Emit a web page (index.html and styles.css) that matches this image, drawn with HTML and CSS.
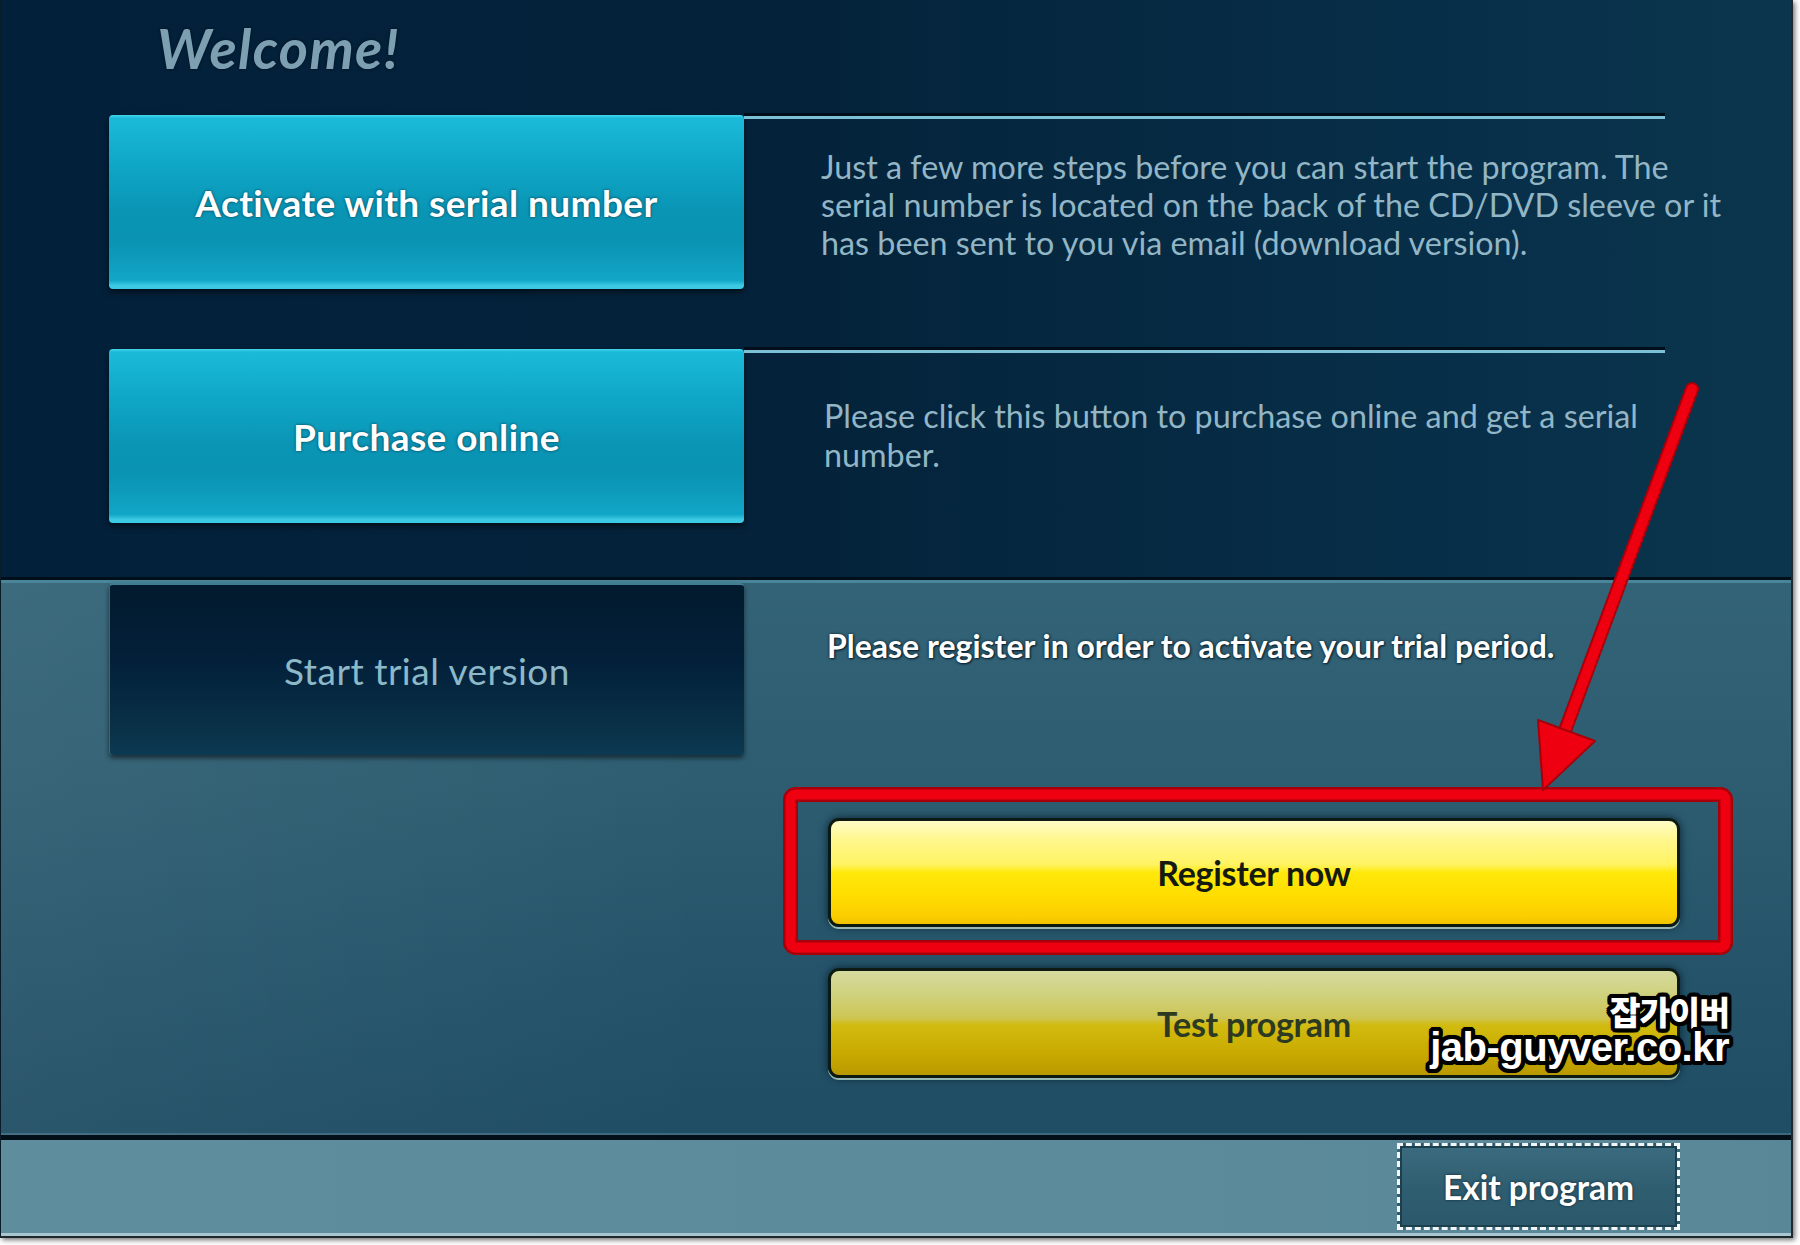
FILE: index.html
```html
<!DOCTYPE html>
<html lang="en">
<head>
<meta charset="utf-8">
<title>Welcome</title>
<link rel="stylesheet" href="styles.css">
</head>
<body>
<div class="app">
  <section class="top">
    <h1 class="welcome">Welcome!</h1>
    <div class="row row-one">
      <div class="tile tile-cyan">Activate with serial number</div>
      <div class="info info-lined">
        <p class="desc">Just a few more steps before you can start the program. The<br>serial number is located on the back of the CD/DVD sleeve or it<br>has been sent to you via email (download version).</p>
      </div>
    </div>
    <div class="row row-two">
      <div class="tile tile-cyan">Purchase online</div>
      <div class="info info-lined">
        <p class="desc desc-low">Please click this button to purchase online and get a serial<br>number.</p>
      </div>
    </div>
  </section>
  <div class="sep"></div>
  <section class="bottom">
    <div class="row row-three">
      <div class="tile tile-dark">Start trial version</div>
      <div class="info">
        <p class="note">Please register in order to activate your trial period.</p>
        <div class="actions">
          <div class="yb yb-register">Register now</div>
          <div class="yb yb-test">Test program</div>
        </div>
      </div>
    </div>
  </section>
  <div class="foot-sep"></div>
  <footer class="footer">
    <div class="exit">Exit program</div>
  </footer>

  <svg class="annot" width="1792" height="1237" viewBox="0 0 1792 1237">
    <rect x="790.5" y="794.5" width="935" height="153" rx="5" fill="none" stroke="#a8000a" stroke-width="15"/>
    <rect x="790.5" y="794.5" width="935" height="153" rx="5" fill="none" stroke="#ee0010" stroke-width="10"/>
    <line x1="1692" y1="389" x2="1566" y2="728" stroke="#a8000a" stroke-width="14" stroke-linecap="round"/>
    <line x1="1692" y1="389" x2="1566" y2="728" stroke="#ee0010" stroke-width="10" stroke-linecap="round"/>
    <polygon points="1538,720 1595,741 1543,790" fill="#ee0010" stroke="#a8000a" stroke-width="2" stroke-linejoin="round"/>
  </svg>

  <div class="watermark">
    <span class="wm-ko">잡가이버</span>
    <span class="wm-en">jab-guyver.co.kr</span>
  </div>
</div>
</body>
</html>
```

FILE: styles.css
```css
html, body {
  margin: 0;
  padding: 0;
}
body {
  background: #ffffff;
  width: 1800px;
  height: 1245px;
  overflow: hidden;
  font-family: "Lato", "Open Sans", sans-serif;
}
.app {
  position: relative;
  box-sizing: border-box;
  width: 1793px;
  height: 1238px;
  border-left: 1px solid #0a1c28;
  border-right: 2px solid #1c2a30;
  border-bottom: 2px solid #1c2a30;
  box-shadow: 2px 2px 5px rgba(0, 0, 0, 0.55);
  display: flex;
  flex-direction: column;
  overflow: hidden;
}

/* ---------- top (dark) ---------- */
.top {
  height: 577px;
  box-sizing: border-box;
  background: linear-gradient(90deg, #03203a 0%, #04233b 45%, #08304a 85%, #0b354d 100%);
}
.welcome {
  margin: 0;
  box-sizing: border-box;
  height: 113px;
  padding: 20px 0 0 156px;
  font-size: 56px;
  line-height: 56px;
  font-style: italic;
  font-weight: 700;
  color: #7c9fb1;
  letter-spacing: 1.3px;
  text-shadow: 0 0 3px rgba(0, 0, 0, 0.6);
}
.row {
  display: flex;
  padding-left: 108px;
}
.row-one {
  height: 176px;
}
.row-two {
  margin-top: 58px;
  height: 176px;
}
.tile {
  flex: 0 0 auto;
  width: 635px;
  height: 174px;
  margin-top: 2px;
  box-sizing: border-box;
  display: flex;
  align-items: center;
  justify-content: center;
  border-radius: 4px;
  font-size: 37px;
  letter-spacing: 0.4px;
}
.tile-cyan {
  background: linear-gradient(180deg, #46d6ee 0, #1bbad8 3px, #10a9c9 25%, #0a95b5 55%, #0a93b3 72%, #12a6c6 95%, #3cc9e3 98%, #3cc9e3 100%);
  box-shadow: 0 3px 6px rgba(0, 0, 0, 0.6);
  color: #ffffff;
  font-weight: 700;
  text-shadow: 0 0 3px rgba(0, 50, 70, 0.9);
}
.info {
  width: 921px;
  box-sizing: border-box;
}
.info-lined {
  border-top: 3px solid #010d18;
  background: linear-gradient(#7cc0d5, #7cc0d5) top left / 100% 3px no-repeat;
}
.desc {
  margin: 0;
  padding: 32px 0 0 77px;
  white-space: nowrap;
  font-size: 32.3px;
  line-height: 38px;
  color: #92b6c5;
}
.desc-low {
  padding-top: 46px;
  padding-left: 80px;
  line-height: 39px;
}

/* ---------- separator ---------- */
.sep {
  height: 6px;
  background: linear-gradient(180deg, #010f1b 0, #010f1b 3px, #4a8599 3px, #4a8599 6px);
}

/* ---------- bottom (teal) ---------- */
.bottom {
  height: 552px;
  background:
    linear-gradient(90deg, rgba(255, 255, 255, 0.05) 0%, rgba(255, 255, 255, 0) 40%),
    linear-gradient(180deg, #336377 0%, #2e5d71 35%, #25546a 70%, #1f4d64 100%);
  box-shadow: inset 0 -2px 0 rgba(150, 190, 200, 0.25);
}
.row-three .tile {
  margin-top: 0;
  height: 172px;
}
.tile-dark {
  background: linear-gradient(180deg, #021a2d 0%, #03203a 45%, #093148 85%, #0c3a52 100%);
  border-top: 2px solid #3f7d92;
  border-left: 1px solid #2e6a7f;
  box-shadow: 0 3px 5px rgba(0, 0, 0, 0.55);
  color: #8cb8c8;
  font-weight: 400;
  letter-spacing: 0.5px;
}
.note {
  margin: 0;
  padding: 43px 0 0 83px;
  white-space: nowrap;
  font-size: 32px;
  line-height: 40px;
  font-weight: 700;
  color: #ffffff;
  text-shadow: 0 0 3px #0a2230, 1px 1px 2px #0a2230;
}
.actions {
  margin: 152px 0 0 84px;
  display: flex;
  flex-direction: column;
  gap: 41px;
  width: 852px;
}
.yb {
  box-sizing: border-box;
  height: 109px;
  border: 3px solid #0c1a12;
  border-radius: 11px;
  display: flex;
  align-items: center;
  justify-content: center;
  font-size: 34px;
  font-weight: 700;
  letter-spacing: -0.3px;
  box-shadow: 0 2px 0 rgba(175, 205, 195, 0.85), 0 0 8px rgba(0, 20, 35, 0.8);
}
.yb-register {
  background: linear-gradient(180deg, #fffcc8 0%, #fff78e 18%, #fff363 42%, #ffe90c 50%, #ffdd00 72%, #fbce00 92%, #efc400 100%);
  color: #141a10;
}
.yb-test {
  height: 110px;
  background: linear-gradient(180deg, #d6da9e 0%, #cfd27e 22%, #cec555 45%, #d2bb10 52%, #c9ab00 78%, #b99900 100%);
  color: #2c3a22;
}

/* ---------- footer ---------- */
.foot-sep {
  height: 5px;
  background: #020f18;
}
.footer {
  flex: 1 1 auto;
  display: flex;
  justify-content: flex-end;
  padding: 3px 111px 0 0;
  background: linear-gradient(90deg, #5e8e9e 0%, #5c8b9b 60%, #5a8797 100%);
  box-shadow: inset 0 -3px 0 #a9c6d0;
}
.exit {
  box-sizing: border-box;
  width: 283px;
  height: 87px;
  border: 3px dashed #f2f6f6;
  background: linear-gradient(180deg, #3b6b7f 0%, #2f5d70 55%, #2c586b 100%);
  box-shadow: inset 0 0 0 2px #1c3f4e;
  display: flex;
  align-items: center;
  justify-content: center;
  color: #ffffff;
  font-size: 33.5px;
  font-weight: 700;
  text-shadow: 0 0 3px #0c2430;
}

/* ---------- overlays ---------- */
.annot {
  position: absolute;
  left: -1px;
  top: 0;
  pointer-events: none;
}
.watermark {
  position: absolute;
  right: 62px;
  top: 993px;
  display: flex;
  flex-direction: column;
  align-items: flex-end;
  color: #ffffff;
  font-weight: 700;
  text-shadow:
    4px 0 0 #000, -4px 0 0 #000, 0 4px 0 #000, 0 -4px 0 #000,
    3px 3px 0 #000, -3px -3px 0 #000, 3px -3px 0 #000, -3px 3px 0 #000,
    2px 4px 0 #000, -2px 4px 0 #000, 4px 2px 0 #000, -4px 2px 0 #000,
    2px -4px 0 #000, -2px -4px 0 #000, 4px -2px 0 #000, -4px -2px 0 #000,
    0 0 5px #000;
}
.wm-ko {
  font-family: "Noto Sans CJK KR", sans-serif;
  font-size: 33.5px;
  font-weight: 900;
  line-height: 35px;
  letter-spacing: -1px;
}
.wm-en {
  font-family: "Liberation Sans", Arial, sans-serif;
  font-size: 40px;
  line-height: 38px;
  letter-spacing: -0.5px;
}
```
